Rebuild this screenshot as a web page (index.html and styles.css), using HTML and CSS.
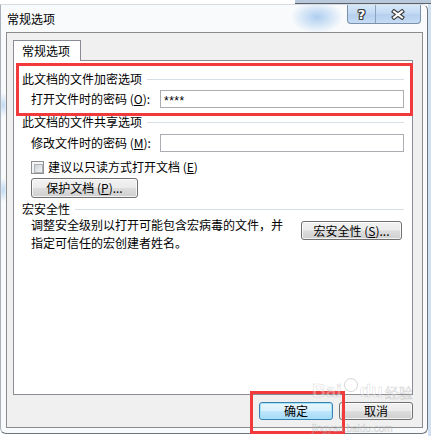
FILE: index.html
```html
<!DOCTYPE html>
<html lang="zh-CN">
<head>
<meta charset="utf-8">
<title>常规选项</title>
<link rel="stylesheet" href="styles.css">
</head>
<body>
<div class="window">
  <div class="titlebar">
    <div class="title">常规选项</div>
    <div class="caption">
      <div class="cap cap-help"><span class="help-glyph">?</span></div>
      <div class="cap cap-close">
        <svg width="14" height="11" viewBox="0 0 14 11"><path class="x-out" d="M3 2.5L11 8.5M11 2.5L3 8.5"/><path class="x-in" d="M3 2.5L11 8.5M11 2.5L3 8.5"/></svg>
      </div>
    </div>
  </div>
  <div class="client">
    <div class="tabs"><div class="tab">常规选项</div></div>
    <div class="panel">
      <div class="group-head"><span>此文档的文件加密选项</span><i class="rule"></i></div>
      <div class="field-row"><label class="field-label">打开文件时的密码 (<u>O</u>):</label><div class="textbox"><span class="stars">****</span></div></div>
      <div class="group-head gh2"><span>此文档的文件共享选项</span><i class="rule"></i></div>
      <div class="field-row fr2"><label class="field-label">修改文件时的密码 (<u>M</u>):</label><div class="textbox"></div></div>
      <div class="check-row"><span class="checkbox"></span><span>建议以只读方式打开文档 (<u>E</u>)</span></div>
      <button class="btn btn-protect">保护文档 (<u>P</u>)...</button>
      <div class="group-head gh3"><span>宏安全性</span><i class="rule"></i></div>
      <div class="macro-row">
        <p class="macro-text">调整安全级别以打开可能包含宏病毒的文件，并<br>指定可信任的宏创建者姓名。</p>
        <button class="btn btn-macro">宏安全性 (<u>S</u>)...</button>
      </div>
    </div>
    <div class="footer">
      <button class="btn btn-ok">确定</button>
      <button class="btn btn-cancel">取消</button>
    </div>
  </div>
</div>
<div class="highlight hl-1"></div>
<div class="highlight hl-2"></div>
<div class="watermark"><div class="wm-top"><span>Bai</span><span class="wm-paw"></span><span>du</span><span class="wm-cn">经验</span></div><div class="wm-url">jingyan.baidu.com</div></div>
</body>
</html>
```
FILE: styles.css
```css
* { box-sizing: border-box; }
html, body { margin: 0; padding: 0; }
body {
  width: 431px;
  height: 436px;
  overflow: hidden;
  position: relative;
  font-family: "Noto Sans CJK SC", "Noto Sans", sans-serif;
  font-size: 12px;
  color: #000;
  background:
    linear-gradient(#59626c, #59626c) 295px 3px / 136px 1px no-repeat,
    linear-gradient(#b9c9db, #b9c9db) 295px 0 / 136px 3px no-repeat,
    linear-gradient(#cfe1f3, #cfe1f3) 428px 4px / 3px 432px no-repeat,
    #ffffff;
}

.window {
  margin-top: 4px;
  width: 428px;
  height: 430px;
  border: 1px solid #6d757e;
  border-top-color: #d7dde3;
  border-left-color: #a9b1ba;
  border-radius: 0 6px 6px 6px;
  background:
    radial-gradient(ellipse 26px 16px at 316px 12px, rgba(160, 198, 238, 0.85), rgba(160, 198, 238, 0)),
    radial-gradient(ellipse 6px 12px at 2px 100px, rgba(180, 210, 240, 0.8), rgba(180, 210, 240, 0)),
    radial-gradient(ellipse 6px 12px at 2px 185px, rgba(180, 210, 240, 0.8), rgba(180, 210, 240, 0)),
    #f8fafc;
  display: flex;
  flex-direction: column;
}

.titlebar {
  height: 27px;
  display: flex;
  justify-content: space-between;
  align-items: flex-start;
  padding: 0 6px;
}
.title {
  line-height: 27px;
}
.caption {
  display: flex;
  height: 19px;
  border: 1px solid #7c90aa;
  border-top: none;
  border-radius: 0 0 4px 4px;
  overflow: hidden;
  background: linear-gradient(#d6e7f9, #c3daf3 45%, #b5cfed 55%, #c5dcf4);
}
.cap {
  display: flex;
  align-items: center;
  justify-content: center;
  height: 100%;
}
.cap-help {
  width: 28px;
  border-right: 1px solid #8ea2bb;
}
.cap-close {
  width: 44px;
}
.help-glyph {
  font-family: "DejaVu Sans", sans-serif;
  font-weight: bold;
  font-size: 13px;
  line-height: 13px;
  color: #fff;
  text-shadow: 1px 0 0 #3c3c3c, -1px 0 0 #3c3c3c, 0 1px 0 #3c3c3c, 0 -1px 0 #3c3c3c,
    1px 1px 0 #3c3c3c, -1px -1px 0 #3c3c3c, 1px -1px 0 #3c3c3c, -1px 1px 0 #3c3c3c;
}
.x-out { stroke: #3c3c3c; stroke-width: 4.2; fill: none; stroke-linecap: square; }
.x-in { stroke: #ffffff; stroke-width: 2; fill: none; stroke-linecap: square; }

.client {
  margin-left: 5px;
  width: 417px;
  height: 396px;
  border: 1px solid #8c8c8c;
  background: #f0f0f0;
  padding: 7px 9px 0 6px;
  display: flex;
  flex-direction: column;
}

.tabs {
  display: flex;
  position: relative;
  z-index: 1;
}
.tab {
  height: 21px;
  margin-bottom: -1px;
  padding: 0 10px 0 8px;
  border: 1px solid #898c95;
  border-bottom: none;
  background: #fff;
  line-height: 20px;
}

.panel {
  height: 335px;
  background: #fff;
  border: 1px solid #898c95;
  padding: 11px 8px 0 8px;
  display: flex;
  flex-direction: column;
}

.group-head {
  height: 14px;
  line-height: 14px;
  display: flex;
  align-items: center;
  white-space: nowrap;
}
.rule {
  flex: 1;
  height: 1px;
  margin-left: 5px;
  background: #d5dfe5;
}
.gh2 { margin-top: 7px; }
.gh3 { margin-top: 4px; }

.field-row {
  margin: 4px 0 0 9px;
  height: 18px;
  display: flex;
  align-items: center;
}
.fr2 { margin-top: 5px; }
.field-label {
  width: 129px;
  flex: none;
  line-height: 14px;
}
.textbox {
  flex: 1;
  height: 18px;
  border: 1px solid #abadb3;
  background: #fff;
  display: flex;
  align-items: center;
  padding: 4px 0 0 3px;
}
.stars {
  font-family: "Liberation Sans", sans-serif;
  font-size: 12px;
  line-height: 12px;
  letter-spacing: 0.5px;
}

.check-row {
  margin: 8px 0 0 9px;
  height: 14px;
  display: flex;
  align-items: center;
  gap: 4px;
  line-height: 14px;
}
.checkbox {
  width: 13px;
  height: 13px;
  flex: none;
  border: 1px solid #8e8f8f;
  background: #f4f4f4;
  padding: 2px;
}
.checkbox::before {
  content: "";
  display: block;
  width: 100%;
  height: 100%;
  border: 1px solid #aeb3b9;
  background: linear-gradient(135deg, #cfd3d8, #f2f3f4);
}

.btn {
  font: inherit;
  color: #000;
  margin: 0;
  padding: 0;
  border: 1px solid #707070;
  border-radius: 3px;
  background: linear-gradient(#f2f2f2 0%, #ebebeb 48%, #dddddd 52%, #cfcfcf 100%);
  box-shadow: inset 0 0 0 1px rgba(255, 255, 255, 0.75);
  display: flex;
  align-items: center;
  justify-content: center;
  line-height: 14px;
  white-space: nowrap;
}
.btn-protect {
  margin: 4px 0 0 9px;
  width: 107px;
  height: 20px;
}

.macro-row {
  margin: 0 0 0 9px;
  display: flex;
  align-items: flex-start;
}
.macro-text {
  margin: 0;
  width: 270px;
  line-height: 18px;
  white-space: nowrap;
}
.btn-macro {
  width: 101px;
  height: 19px;
  margin-top: 5px;
}

.footer {
  margin-top: 7px;
  display: flex;
  justify-content: flex-end;
  gap: 6px;
}
.btn-ok, .btn-cancel {
  width: 74px;
  height: 18px;
}
.btn-ok {
  border-color: #3c7fb1;
  background: linear-gradient(#eaf6fd 0%, #d9f0fc 48%, #bee6fd 52%, #a7d9f5 100%);
  box-shadow: inset 0 0 0 1px #9fe4fb;
}

.highlight {
  position: absolute;
  border: 3px solid #f23a3c;
  pointer-events: none;
}
.hl-1 { left: 16px; top: 63px; width: 397px; height: 53px; }
.hl-2 { left: 250px; top: 391px; width: 95px; height: 43px; }

.watermark {
  position: absolute;
  left: 312px;
  top: 378px;
  color: rgba(255, 255, 255, 0.35);
  -webkit-text-stroke: 0.6px rgba(120, 120, 120, 0.3);
  pointer-events: none;
  font-family: "Liberation Sans", "Noto Sans CJK SC", sans-serif;
}
.wm-top {
  display: flex;
  align-items: flex-end;
  font-size: 19px;
  font-weight: bold;
  line-height: 22px;
}
.wm-paw {
  width: 14px;
  height: 14px;
  margin: 0 2px 10px;
  border-radius: 50%;
  border: 1px solid rgba(120, 120, 120, 0.3);
}
.wm-cn {
  font-size: 14px;
  font-weight: normal;
  margin-left: 2px;
  line-height: 18px;
}
.wm-url {
  font-size: 10px;
  line-height: 11px;
  margin-top: 21px;
}
```
